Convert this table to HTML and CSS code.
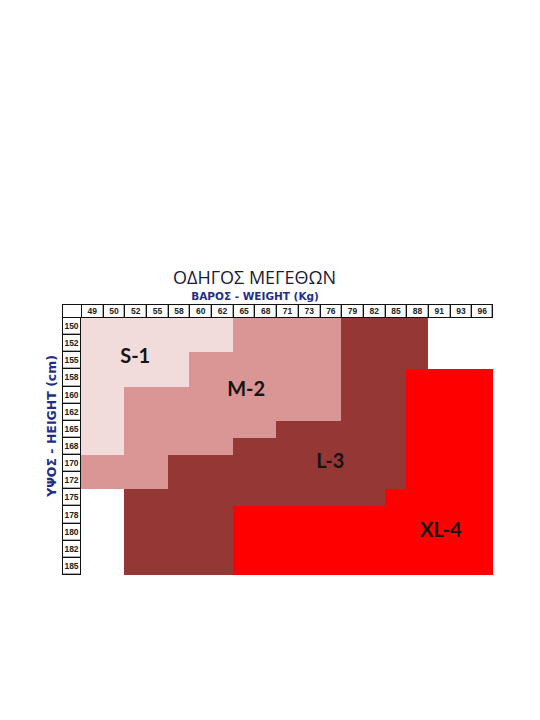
FILE: index.html
```html
<!DOCTYPE html>
<html lang="el">
<head>
    <meta charset="UTF-8">
    <meta name="viewport" content="width=device-width, initial-scale=1.0">
    <title>Οδηγός μεγεθών</title>
    <link rel="stylesheet" href="styles.css">
</head>
<body>
    <div class="chart">
        <h1 class="title">ΟΔΗΓΟΣ ΜΕΓΕΘΩΝ</h1>
        <div class="axis-x">ΒΑΡΟΣ - WEIGHT (Kg)</div>

        <div class="chart-body">
            <!-- Κάθετος άξονας -->
            <div class="axis-y"><span>ΥΨΟΣ - HEIGHT (cm)</span></div>

            <div class="table">
                <div class="corner"></div>

                <!-- Βάρος -->
                <div class="weights">
                    <div>49</div><div>50</div><div>52</div><div>55</div><div>58</div>
                    <div>60</div><div>62</div><div>65</div><div>68</div><div>71</div>
                    <div>73</div><div>76</div><div>79</div><div>82</div><div>85</div>
                    <div>88</div><div>91</div><div>93</div><div>96</div>
                </div>

                <!-- Ύψος -->
                <div class="heights">
                    <div>150</div><div>152</div><div>155</div><div>158</div><div>160</div>
                    <div>162</div><div>165</div><div>168</div><div>170</div><div>172</div>
                    <div>175</div><div>178</div><div>180</div><div>182</div><div>185</div>
                </div>

                <!-- Περιοχές μεγεθών -->
                <div class="plot">
                    <div class="zone l3 l3-base"></div>

                    <div class="zone xl4 xl4-a"></div>
                    <div class="zone xl4 xl4-b"></div>
                    <div class="zone xl4 xl4-c"></div>

                    <div class="zone m2 m2-a"></div>
                    <div class="zone m2 m2-b"></div>
                    <div class="zone m2 m2-c"></div>
                    <div class="zone m2 m2-d"></div>

                    <div class="zone s1 s1-a"></div>
                    <div class="zone s1 s1-b"></div>
                    <div class="zone s1 s1-c"></div>

                    <div class="size-label label-s1">S-1</div>
                    <div class="size-label label-m2">M-2</div>
                    <div class="size-label label-l3">L-3</div>
                    <div class="size-label label-xl4">XL-4</div>
                </div>
            </div>
        </div>
    </div>
</body>
</html>
```

FILE: styles.css
```css
body, html {
    margin: 0;
    padding: 0;
    background-color: #FFFFFF;
    font-family: "Open Sans", "DejaVu Sans", sans-serif;
}

.chart {
    width: 453px;
    margin-left: 40px;
    padding-top: 265px;
}

.title {
    margin: 0;
    padding-right: 24px;
    font-size: 18px;
    line-height: 25px;
    font-weight: normal;
    text-align: center;
    color: #1a1a33;
}

.axis-x {
    padding-right: 23px;
    margin-bottom: 1px;
    font-family: "DejaVu Sans", sans-serif;
    font-size: 10.5px;
    line-height: 13px;
    font-weight: bold;
    text-align: center;
    color: #1f2f86;
}

.chart-body {
    display: flex;
}

/* Vertical axis */
.axis-y {
    width: 22px;
    display: flex;
    align-items: center;
    justify-content: center;
    padding-top: 14px;
    padding-bottom: 42px;
}

.axis-y span {
    writing-mode: vertical-rl;
    transform: rotate(180deg);
    font-family: "DejaVu Sans", sans-serif;
    font-size: 12.5px;
    font-weight: bold;
    color: #1f2f86;
    white-space: nowrap;
}

/* Table */
.table {
    width: 431px;
    height: 271px;
    display: grid;
    grid-template-columns: 19px 1fr;
    grid-template-rows: 14px 1fr;
}

.corner {
    border: 1px solid #111;
    border-right: none;
    box-sizing: border-box;
}

.weights,
.heights {
    display: grid;
    font-family: "Liberation Sans", sans-serif;
    font-size: 8.5px;
    font-weight: bold;
    color: #222;
}

.weights {
    grid-template-columns: repeat(19, 1fr);
    border-top: 1px solid #111;
    border-bottom: 1px solid #111;
}

.weights div {
    border-left: 1px solid #111;
    box-shadow: inset -1px 0 0 #aaa;
    display: flex;
    align-items: center;
    justify-content: center;
}

.weights div:last-child {
    border-right: 1px solid #111;
}

.heights {
    grid-template-rows: repeat(15, 1fr);
    border-left: 1px solid #111;
    border-right: 1px solid #111;
}

.heights div {
    border-bottom: 1px solid #111;
    box-shadow: inset 0 -1px 0 #aaa;
    display: flex;
    align-items: center;
    justify-content: center;
}

/* Plot area */
.plot {
    display: grid;
    grid-template-columns: repeat(19, 1fr);
    grid-template-rows: repeat(15, 1fr);
}

.s1 { background-color: #f2dcdb; }
.m2 { background-color: #d99694; }
.l3 { background-color: #953735; }
.xl4 { background-color: #ff0000; }

.l3-base { grid-row: 1 / 16; grid-column: 3 / 17; }

.xl4-a { grid-row: 4 / 16; grid-column: 16 / 20; }
.xl4-b { grid-row: 11 / 16; grid-column: 15 / 20; }
.xl4-c { grid-row: 12 / 16; grid-column: 8 / 20; }

.m2-a { grid-row: 1 / 7; grid-column: 1 / 13; }
.m2-b { grid-row: 7 / 8; grid-column: 1 / 10; }
.m2-c { grid-row: 8 / 9; grid-column: 1 / 8; }
.m2-d { grid-row: 9 / 11; grid-column: 1 / 5; }

.s1-a { grid-row: 1 / 3; grid-column: 1 / 8; }
.s1-b { grid-row: 3 / 5; grid-column: 1 / 6; }
.s1-c { grid-row: 5 / 9; grid-column: 1 / 3; }

.size-label {
    display: flex;
    align-items: center;
    justify-content: center;
    font-family: Lato, "Open Sans", sans-serif;
    font-size: 20px;
    line-height: 1;
    font-weight: bold;
    color: #151515;
}

.label-s1 { grid-row: 2 / 4; grid-column: 1 / 6; padding-top: 5px; }
.label-m2 { grid-row: 4 / 6; grid-column: 7 / 10; padding-top: 3px; padding-left: 5px; }
.label-l3 { grid-row: 8 / 10; grid-column: 11 / 14; padding-top: 10px; }
.label-xl4 { grid-row: 12 / 15; grid-column: 16 / 19; padding-bottom: 7px; padding-left: 4px; }
```
